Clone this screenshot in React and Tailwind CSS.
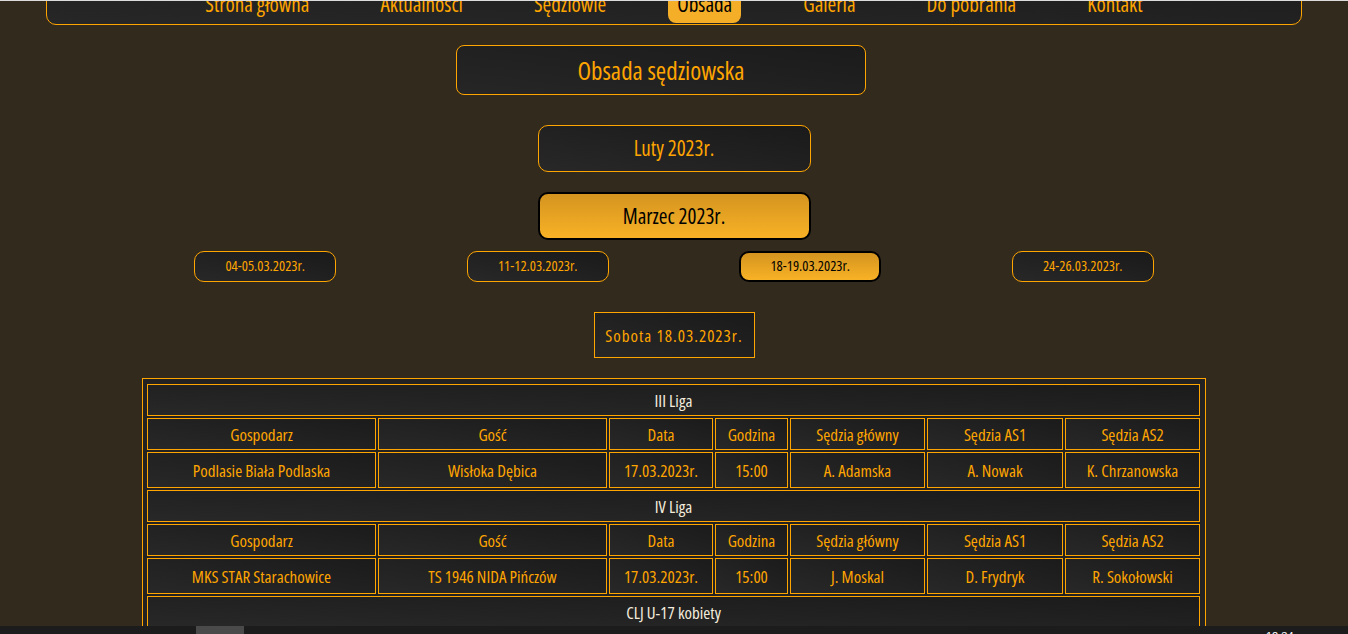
import React from "react";

const navItems = ["Strona główna", "Aktualności", "Sędziowie", "Obsada", "Galeria", "Do pobrania", "Kontakt"];
const dates = ["04-05.03.2023r.", "11-12.03.2023r.", "18-19.03.2023r.", "24-26.03.2023r."];
const headers = ["Gospodarz", "Gość", "Data", "Godzina", "Sędzia główny", "Sędzia AS1", "Sędzia AS2"];
const sections = [
  {
    title: "III Liga",
    rows: [["Podlasie Biała Podlaska", "Wisłoka Dębica", "17.03.2023r.", "15:00", "A. Adamska", "A. Nowak", "K. Chrzanowska"]],
  },
  {
    title: "IV Liga",
    rows: [["MKS STAR Starachowice", "TS 1946 NIDA Pińczów", "17.03.2023r.", "15:00", "J. Moskal", "D. Frydryk", "R. Sokołowski"]],
  },
  {
    title: "CLJ U-17 kobiety",
    rows: [["KS Korona Kielce", "AZS UJ Kraków", "18.03.2023r.", "12:00", "M. Kowalczyk", "P. Wójcik", "E. Zielińska"]],
  },
];

const cell =
  "flex items-center justify-center border border-[#ffa500] bg-linear-to-tr from-[#282828] to-[#1b1b1b] text-[17px] leading-none";

export default function App() {
  return (
    <div className="min-h-screen bg-[#332a1e] font-['Open_Sans',sans-serif] font-stretch-condensed font-medium text-[#ffa500] pb-[60px]">
      {/* nav */}
      <nav className="mx-[46px] -mt-[16px] rounded-b-[10px] border border-[#ffa500] bg-linear-to-tr from-[#272727] to-[#1d1d1d] pb-[1px]">
        <ul className="flex justify-center gap-[53px]">
          {navItems.map((n) => (
            <li
              key={n}
              className={
                "flex h-[38px] items-center px-[9px] text-[21px] leading-none " +
                (n === "Obsada" ? "rounded-b-[8px] bg-[#f5ae28] text-black" : "text-[#ffa500]")
              }
            >
              {n}
            </li>
          ))}
        </ul>
      </nav>

      {/* title */}
      <div className="mt-[20px] ml-[456px] flex h-[50px] w-[410px] items-center justify-center rounded-[8px] border border-[#ffa500] bg-linear-to-tr from-[#262626] to-[#1b1b1b] text-[25px] leading-none">
        Obsada sędziowska
      </div>

      {/* months */}
      <div className="mx-auto mt-[30px] flex h-[47px] w-[273px] items-center justify-center rounded-[10px] border border-[#ffa500] bg-linear-to-tr from-[#282828] to-[#1a1a1a] text-[21px] leading-none">
        Luty 2023r.
      </div>
      <div className="mx-auto mt-[20px] flex h-[48px] w-[273px] items-center justify-center rounded-[10px] border-2 border-black bg-linear-to-b from-[#d4941f] to-[#f9b226] text-[21px] leading-none text-black">
        Marzec 2023r.
      </div>

      {/* dates */}
      <div className="mx-auto mt-[11px] grid w-[1090px] grid-cols-4 justify-items-center">
        {dates.map((d) => {
          const active = d.startsWith("18");
          return (
            <div
              key={d}
              className={
                "flex h-[31px] items-center justify-center rounded-[10px] text-[14.5px] leading-none " +
                (active
                  ? "border-2 border-black bg-linear-to-b from-[#d4941f] to-[#f9b226] text-black px-[29px]"
                  : "border border-[#ffa500] bg-linear-to-tr from-[#282828] to-[#1a1a1a] px-[30px]")
              }
            >
              {d}
            </div>
          );
        })}
      </div>

      {/* day */}
      <div className="mx-auto mt-[30px] flex h-[46px] w-[161px] items-center justify-center border border-[#ffa500] bg-linear-to-tr from-[#282828] to-[#1a1a1a] text-[17px] leading-none tracking-[1px]">
        Sobota 18.03.2023r.
      </div>

      {/* table */}
      <div className="mx-auto mt-[20px] w-[1064px] border border-[#ffa500] bg-[#222222] pt-[5px] pb-[4px] pl-[4px] pr-[5px]">
        <div className="grid grid-cols-[229px_229px_104px_73px_135px_136px_135px] gap-[2px]">
          {sections.map((s) => (
            <React.Fragment key={s.title}>
              <div className={cell + " col-span-7 h-[32px] text-[#f3ecdc]"}>{s.title}</div>
              {headers.map((h) => (
                <div key={s.title + h} className={cell + " h-[32px]"}>
                  {h}
                </div>
              ))}
              {s.rows.map((r, i) =>
                r.map((v, j) => (
                  <div key={s.title + i + "-" + j} className={cell + " h-[36px]"}>
                    {v}
                  </div>
                ))
              )}
            </React.Fragment>
          ))}
        </div>
      </div>

      {/* top line of browser frame */}
      <div className="fixed inset-x-0 top-0 h-px bg-[#dcdcdc]" />
      {/* taskbar strip */}
      <div className="fixed inset-x-0 bottom-0 h-[8px] overflow-hidden bg-[#1c1c1c]">
        <div className="absolute left-[196px] top-0 h-full w-[48px] bg-[#4a4a4a]" />
        <div className="absolute left-[1266px] top-[5px] font-['Liberation_Sans',sans-serif] font-stretch-normal text-[11px] leading-none text-white">
          12:34
        </div>
      </div>
    </div>
  );
}
